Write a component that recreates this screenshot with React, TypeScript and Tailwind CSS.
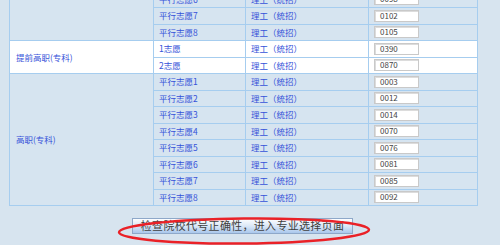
import React from 'react';

const upperRows = [
  { name: '平行志愿6', code: '0098' },
  { name: '平行志愿7', code: '0102' },
  { name: '平行志愿8', code: '0105' },
];

const earlyRows = [
  { name: '1志愿', code: '0390' },
  { name: '2志愿', code: '0870' },
];

const vocRows = [
  { name: '平行志愿1', code: '0003' },
  { name: '平行志愿2', code: '0012' },
  { name: '平行志愿3', code: '0014' },
  { name: '平行志愿4', code: '0070' },
  { name: '平行志愿5', code: '0076' },
  { name: '平行志愿6', code: '0081' },
  { name: '平行志愿7', code: '0085' },
  { name: '平行志愿8', code: '0092' },
];

const cell = 'border border-[#a6cdef] px-[5px] py-0 text-left align-middle';

function Row({ name, code, label, span, white }: { name: string; code: string; label?: string; span?: number; white?: boolean }) {
  return (
    <tr className={'h-[16.5px] ' + (white ? 'bg-white' : 'bg-[#d6e4f0]')}>
      {span !== undefined && (
        <td rowSpan={span} className={cell + ' pl-[6px]'}>
          {label}
        </td>
      )}
      <td className={cell}>{name}</td>
      <td className={cell}>理工（统招）</td>
      <td className={cell}>
        <div className="w-[45px] h-[12px] bg-white border border-[#c9c9c9] shadow-[inset_1px_1px_0_#dcdcdc] pl-[5px] text-[8px] leading-[10px] text-[#444]">
          {code}
        </div>
      </td>
    </tr>
  );
}

export default function App() {
  return (
    <div className="w-[500px] h-[245px] overflow-hidden bg-[#d7e4ef] relative" style={{ fontFamily: '"Noto Sans CJK SC", "Noto Sans", sans-serif' }}>
      <table className="-mt-[9.5px] ml-[9px] w-[468px] border-collapse table-fixed text-[8.5px] text-[#3552d9]">
        <colgroup>
          <col className="w-[144px]" />
          <col className="w-[92px]" />
          <col className="w-[123px]" />
          <col className="w-[109px]" />
        </colgroup>
        <tbody>
          {upperRows.map((r, i) => (
            <Row key={'u' + i} {...r} span={i === 0 ? upperRows.length : undefined} label="" />
          ))}
          {earlyRows.map((r, i) => (
            <Row key={'e' + i} {...r} white span={i === 0 ? earlyRows.length : undefined} label="提前高职(专科)" />
          ))}
          {vocRows.map((r, i) => (
            <Row key={'v' + i} {...r} span={i === 0 ? vocRows.length : undefined} label="高职(专科)" />
          ))}
        </tbody>
      </table>

      <div className="mt-[12px] flex">
        <button className="ml-[132px] w-[221px] h-[16px] border border-[#8ea8c9] bg-gradient-to-b from-[#fdfeff] via-[#dbe8f7] to-[#a9c7ec] text-[11px] leading-[14px] text-[#404040] tracking-[0.3px]" style={{ fontFamily: '"Liberation Serif", "Noto Sans CJK SC", serif' }}>
          检查院校代号正确性，进入专业选择页面
        </button>
      </div>

      <svg className="absolute left-0 top-0 pointer-events-none" width="500" height="245">
        <ellipse cx="244" cy="231" rx="125" ry="12.5" fill="none" stroke="#ea2127" strokeWidth="2.5" transform="rotate(-0.6 244 231)" />
      </svg>
    </div>
  );
}
